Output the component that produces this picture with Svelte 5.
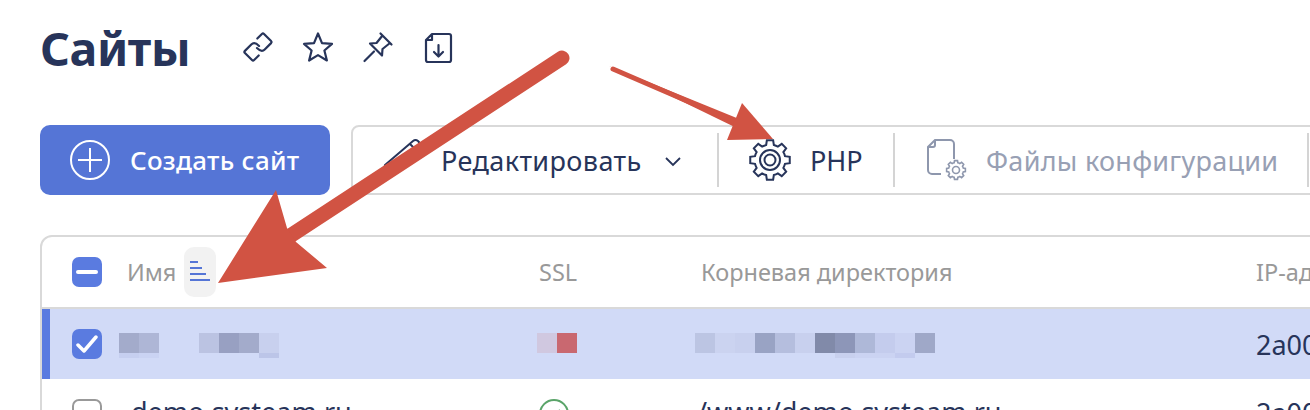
<script>
  function gear(cx, cy, R, r, n) {
    const pts = [];
    const step = (Math.PI * 2) / n;
    for (let i = 0; i < n; i++) {
      const a = i * step - Math.PI / 2;
      const w = step * 0.2, v = step * 0.32;
      const p = (rad, ang) => `${(cx + rad * Math.cos(ang)).toFixed(2)} ${(cy + rad * Math.sin(ang)).toFixed(2)}`;
      pts.push(`${i ? 'L' : 'M'}${p(r, a - v)}`, `L${p(R, a - w)}`, `L${p(R, a + w)}`, `L${p(r, a + v)}`);
      pts.push(`A${r} ${r} 0 0 1 ${p(r, a + step - v)}`);
    }
    return pts.join(' ') + 'Z';
  }
  const nameBlocks = ['#a3abcb','#aeb6d6','#d1daf7','#d1daf7','#bbc3e2','#98a0c2','#a3abcb','#c8d0ee'];
  const nameLower = ['#c6cff0','#cad3f3','#d1daf7','#d1daf7','#d1daf7','#d1daf7','#d1daf7','#bcc5e8'];
  const rootBlocks = ['#bcc5e3','#cbd3f0','#c8d0ee','#99a3c4','#b5bede','#c8d0ee','#818aa9','#8d96b8','#aeb8d8','#c4cced','#cbd3f2','#9fa8c8'];
  const rootLower = ['#d1daf7','#d1daf7','#d1daf7','#d1daf7','#d1daf7','#d1daf7','#d1daf7','#c8d0ee','#cbd3f2','#cbd3f2','#c3cbee','#d1daf7'];
  const sslBlocks = ['#d0c8e0','#c96870'];
</script>

<div class="page">
  <header class="head">
    <h1>Сайты</h1>
    <div class="head-icons">
      <svg width="30" height="30" viewBox="0 0 30 30"><g transform="rotate(-45 15 15)"><path d="M16.500 15c0-3.500-1.500-6.500-4.500-6.500H3A1.500 1.500 0 0 0 1.500 10v10A1.500 1.500 0 0 0 3 21.500h6.500"/><path d="M13.500 15c0 3.500 1.500 6.500 4.500 6.500h9a1.500 1.500 0 0 0 1.500-1.500V10A1.500 1.500 0 0 0 27 8.500h-6.500"/></g></svg>
      <svg width="30" height="30" viewBox="0 0 30 30"><path d="M15 1.500l4 9.600 10 .8-7.600 6.600 2.500 10-8.900-5.400-8.900 5.400 2.500-10L1 11.900l10-.8z"/></svg>
      <svg width="30" height="30" viewBox="0 0 30 30"><path d="M1.500 29L11 19.500M17.500 1.500l11 11M19.500 3.500l-6 7.500-6.500.5 12 12 .5-6.500 7.500-6"/></svg>
      <svg width="30" height="30" viewBox="0 0 30 30"><path d="M9 2h17a2 2 0 0 1 2 2v24a2 2 0 0 1-2 2H5a2 2 0 0 1-2-2V8zM9 2v6H3M15.500 13v11M11 20l4.500 4.500L20 20"/></svg>
    </div>
  </header>

  <div class="actions">
    <button class="create">
      <svg width="40" height="40" viewBox="0 0 40 40"><circle cx="20" cy="20" r="19"/><path d="M20 8v24M8 20h24"/></svg>
      <span>Создать сайт</span>
    </button>
    <div class="toolbar">
      <div class="tool edit">
        <svg class="pencil" width="36" height="34" viewBox="0 0 36 34"><path d="M-2 33l1-6L27 3a4 4 0 0 1 6 5L8 31zM24 6l6 6"/></svg>
        <span>Редактировать</span>
        <svg class="chev" width="16" height="10" viewBox="0 0 16 10"><path d="M1 1l7 7 7-7"/></svg>
      </div>
      <div class="tool php">
        <svg width="42" height="42" viewBox="0 0 42 42"><path d={gear(21, 21, 20, 15.500, 8)}/><circle cx="21" cy="21" r="10"/><circle cx="21" cy="21" r="5.500"/></svg>
        <span>PHP</span>
      </div>
      <div class="tool off">
        <svg width="44" height="44" viewBox="0 0 44 44"><path d="M17 36H8a4 4 0 0 1-4-4V9l7-7h15a4 4 0 0 1 4 4v15M11 2v5a2 2 0 0 1-2 2H4"/><path class="thin" d={gear(32, 32, 9.500, 7.500, 8)}/><circle class="thin" cx="32" cy="32" r="3.500"/></svg>
        <span>Файлы конфигурации</span>
      </div>
    </div>
  </div>

  <div class="table">
    <div class="row top">
      <span class="box on"><i class="dash"></i></span>
      <div class="name-head">
        <span>Имя</span>
        <span class="sort"><svg width="20" height="22" viewBox="0 0 20 22"><path d="M0 1h8M0 7h12M0 13h16M0 19h20"/></svg></span>
      </div>
      <span>SSL</span>
      <span>Корневая директория</span>
      <span>IP-адрес</span>
    </div>
    <div class="row sel">
      <span class="box on"><svg width="22" height="18" viewBox="0 0 22 18"><path d="M2 10l6 6L20 2"/></svg></span>
      <div class="mosaic m-name">
        <div class="m-row">{#each nameBlocks as c, i (i)}<i style="background:{c}"></i>{/each}</div>
        <div class="m-row low">{#each nameLower as c, i (i)}<i style="background:{c}"></i>{/each}</div>
      </div>
      <div class="mosaic m-ssl">
        <div class="m-row">{#each sslBlocks as c, i (i)}<i style="background:{c}"></i>{/each}</div>
      </div>
      <div class="mosaic m-root">
        <div class="m-row">{#each rootBlocks as c, i (i)}<i style="background:{c}"></i>{/each}</div>
        <div class="m-row low">{#each rootLower as c, i (i)}<i style="background:{c}"></i>{/each}</div>
      </div>
      <span class="val">2a00:f940</span>
    </div>
    <div class="row plain">
      <span class="box"></span>
      <span class="val site">demo.systeam.ru</span>
      <svg class="ok" width="30" height="30" viewBox="0 0 30 30"><circle cx="15" cy="15" r="14"/><path d="M9 15l4 5 8-9"/></svg>
      <span class="val path">/www/demo.systeam.ru</span>
      <span class="val up">2a00:f940</span>
    </div>
  </div>

  <svg class="arrows" width="1310" height="410" viewBox="0 0 1310 410">
    <path class="shaft" d="M562 58L290 236"/>
    <path class="tip" d="M218 283L276 190 287 228 296 242 327 268z"/>
    <path class="tip" d="M609 66L749 123 745 132z"/>
    <path class="shaft2" d="M613 69L745 126"/>
    <path class="tip" d="M742 103L773 139 727 140z"/>
  </svg>
</div>

<style>
  :global(body) {
    margin: 0;
    background: #fff;
  }
  .page {
    position: relative;
    width: 1310px;
    height: 410px;
    overflow: hidden;
    box-sizing: border-box;
    padding: 0 0 0 40px;
    font-family: "Noto Sans", "Open Sans", sans-serif;
    color: #27345a;
  }
  .head {
    display: flex;
    align-items: center;
    height: 96px;
    gap: 53px;
  }
  h1 {
    margin: 0;
    font-size: 46.500px;
    font-weight: 700;
    line-height: 96px;
    letter-spacing: -0.4px;
    width: 150px;
  }
  .head-icons {
    display: flex;
    gap: 30px;
    margin-top: -2px;
  }
  .head-icons svg {
    overflow: visible;
  }
  .head-icons svg path {
    fill: none;
    stroke: #27345a;
    stroke-width: 2.200;
    stroke-linejoin: round;
    stroke-linecap: round;
  }
  .actions {
    display: flex;
    gap: 21px;
    margin-top: 29px;
    height: 70px;
  }
  .create {
    flex: none;
    width: 290px;
    height: 70px;
    box-sizing: border-box;
    display: flex;
    align-items: center;
    gap: 20px;
    padding: 0 0 0 30px;
    background: #5575d6;
    border: 0;
    border-radius: 10px;
    color: #fff;
    font: 500 26px "Noto Sans", sans-serif;
    letter-spacing: 0.27px;
  }
  .create svg * {
    fill: none;
    stroke: #fff;
    stroke-width: 2;
  }
  .toolbar {
    flex: none;
    width: 1000px;
    height: 70px;
    box-sizing: border-box;
    display: flex;
    align-items: center;
    border: 2px solid #d9d9d9;
    border-radius: 8px;
    font-size: 27px;
  }
  .tool {
    height: 54px;
    display: flex;
    align-items: center;
    box-sizing: border-box;
    border-right: 2px solid #d4d4d4;
  }
  .tool svg {
    overflow: visible;
  }
  .tool svg path, .tool svg circle {
    fill: none;
    stroke: #27345a;
    stroke-width: 2;
  }
  .edit {
    width: 366px;
    padding-left: 30px;
    gap: 23px;
    flex: none;
    letter-spacing: 0.4px;
  }
  .pencil {
    margin-left: 3px;
    margin-top: -10px;
    margin-right: -4px;
  }
  .chev {
    margin-left: 0;
    margin-top: 3px;
  }
  .tool svg.chev path {
    stroke-width: 1.800;
  }
  .php {
    width: 176px;
    flex: none;
    padding-left: 30px;
    gap: 19px;
  }
  .off {
    width: 414px;
    flex: none;
    padding-left: 29px;
    gap: 18px;
    color: #98a0b4;
    letter-spacing: 0.28px;
  }
  .tool.off svg path, .tool.off svg circle {
    stroke: #8e97ad;
  }
  .tool.off svg .thin {
    stroke-width: 1.600;
  }
  .table {
    box-sizing: border-box;
    width: 1400px;
    margin-top: 40px;
    border: 2px solid #d9d9d9;
    border-radius: 12px 0 0 0;
  }
  .row {
    display: grid;
    grid-template-columns: 55px 412px 162px 555px 1fr;
    align-items: center;
    box-sizing: border-box;
    padding-left: 30px;
    height: 70px;
  }
  .top {
    height: 72px;
    border-bottom: 2px solid #d9d9d9;
    color: #999;
    font-size: 23.500px;
  }
  .name-head {
    display: flex;
    align-items: center;
    gap: 8px;
  }
  .sort {
    width: 32px;
    height: 50px;
    display: flex;
    align-items: center;
    justify-content: center;
    background: #f2f2f2;
    border-radius: 10px;
  }
  .sort path {
    fill: none;
    stroke: #5575d6;
    stroke-width: 2;
  }
  .box {
    width: 30px;
    height: 30px;
    box-sizing: border-box;
    border: 2px solid #999;
    border-radius: 7px;
    display: flex;
    align-items: center;
    justify-content: center;
  }
  .box.on {
    background: #5a7be0;
    border: 0;
  }
  .dash {
    display: block;
    width: 22px;
    height: 4px;
    border-radius: 2px;
    background: #fff;
  }
  .box svg path {
    fill: none;
    stroke: #fff;
    stroke-width: 3.500;
    stroke-linecap: round;
    stroke-linejoin: round;
  }
  .sel {
    background: #d1daf7;
    border-left: 8px solid #5a7be0;
    padding-left: 22px;
  }
  .m-row {
    display: flex;
  }
  .m-row i {
    display: block;
    width: 20px;
    height: 20px;
  }
  .m-row.low i {
    height: 5px;
  }
  .mosaic {
    margin-top: 3px;
    height: 25px;
  }
  .m-name {
    margin-left: -8px;
  }
  .m-ssl {
    margin-left: -2px;
  }
  .m-root {
    margin-left: -6px;
  }
  .val {
    font-size: 27px;
    white-space: nowrap;
  }
  .site {
    margin-left: 4px;
    margin-top: -6px;
  }
  .path {
    margin-left: -4px;
    margin-top: -6px;
  }
  .up {
    margin-top: -4px;
  }
  .ok circle, .ok path {
    fill: none;
    stroke: #5aa469;
    stroke-width: 2;
  }
  .arrows {
    position: absolute;
    left: 0;
    top: 0;
    pointer-events: none;
  }
  .shaft {
    fill: none;
    stroke: #d15343;
    stroke-width: 15;
    stroke-linecap: round;
  }
  .shaft2 {
    fill: none;
    stroke: #d15343;
    stroke-width: 5;
    stroke-linecap: round;
  }
  .tip {
    fill: #d15343;
  }
</style>
